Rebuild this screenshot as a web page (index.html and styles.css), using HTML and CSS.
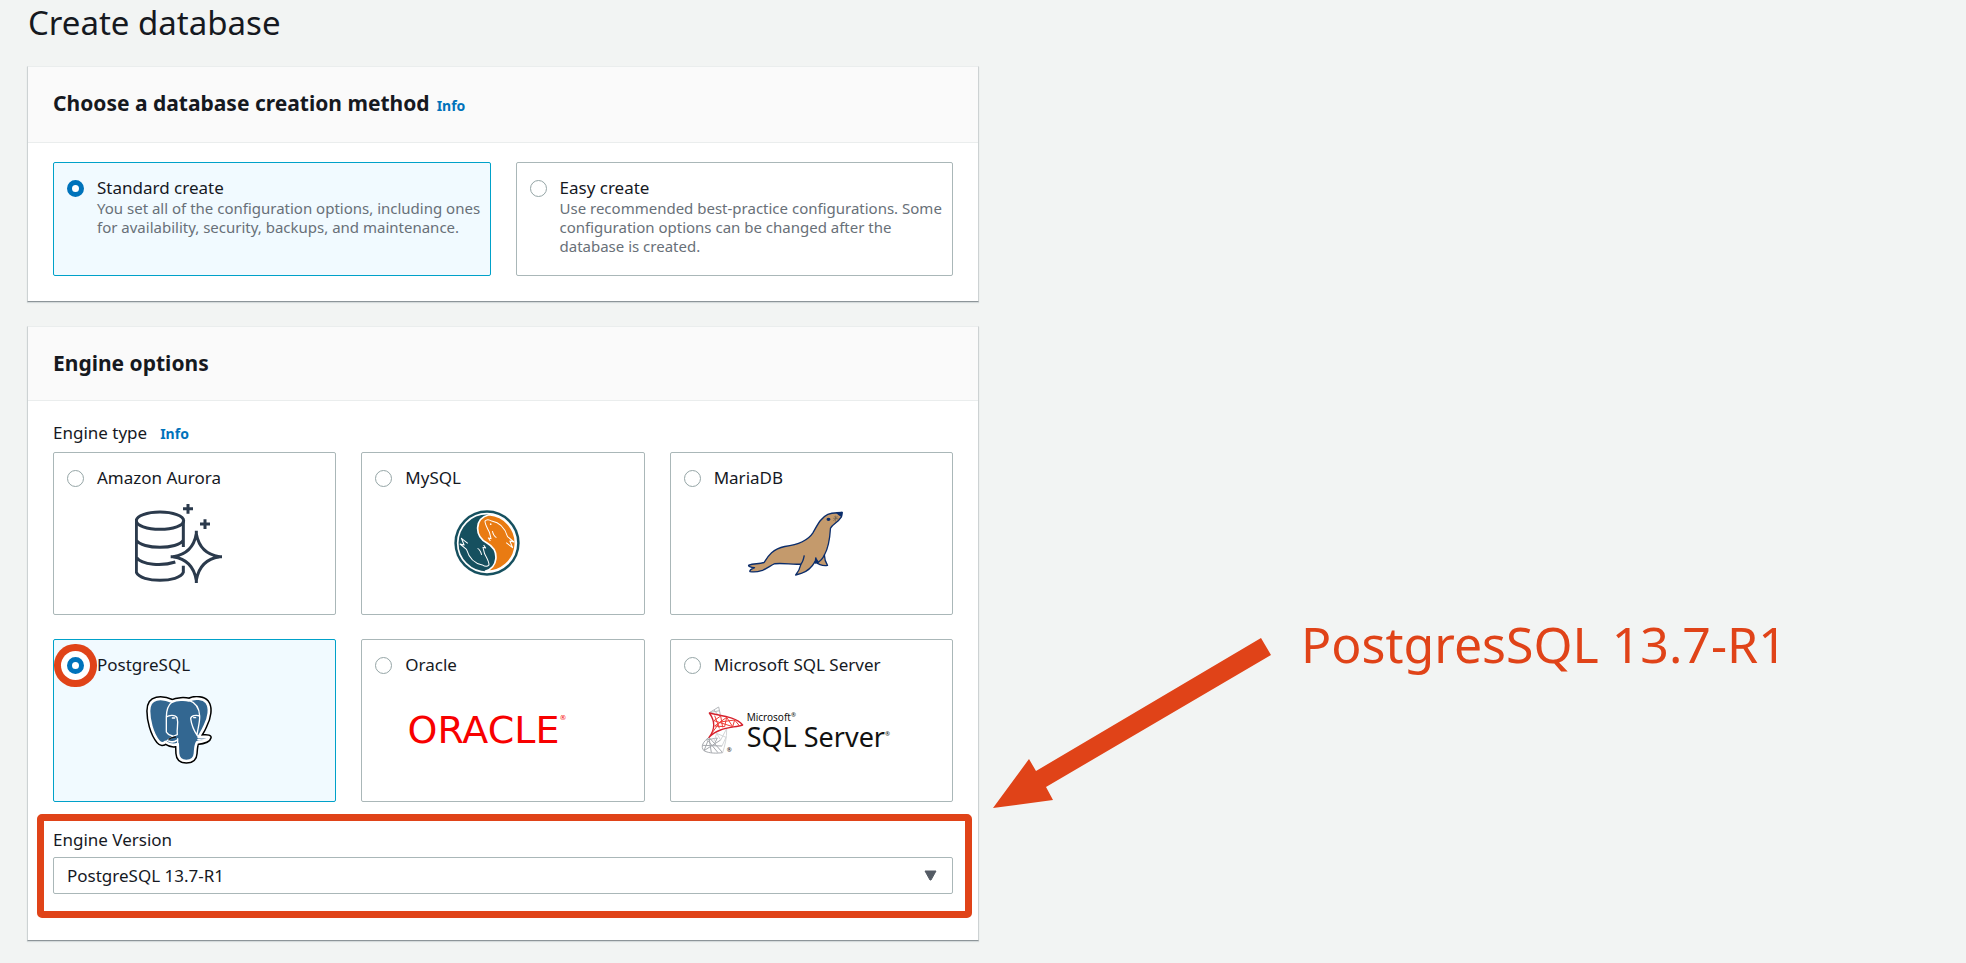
FILE: index.html
```html
<!DOCTYPE html>
<html lang="en">
<head>
<meta charset="utf-8">
<title>Create database</title>
<link rel="stylesheet" href="styles.css">
</head>
<body>
<div class="page">
  <main class="wizard">
    <h1 class="page-title">Create database</h1>

    <section class="panel">
      <header class="panel-header panel-header-info">
        <h2 class="panel-title">Choose a database creation method</h2>
        <a class="info" href="#">Info</a>
      </header>
      <div class="panel-body method-body">
        <div class="methods">
          <label class="tile method selected">
            <input class="radio" type="radio" name="method" checked>
            <span class="tile-text">
              <span class="tile-name">Standard create</span>
              <span class="tile-desc">You set all of the configuration options, including ones for availability, security, backups, and maintenance.</span>
            </span>
          </label>
          <label class="tile method">
            <input class="radio" type="radio" name="method">
            <span class="tile-text">
              <span class="tile-name">Easy create</span>
              <span class="tile-desc">Use recommended best-practice configurations. Some configuration options can be changed after the database is created.</span>
            </span>
          </label>
        </div>
      </div>
    </section>

    <section class="panel">
      <header class="panel-header">
        <h2 class="panel-title">Engine options</h2>
      </header>
      <div class="panel-body">
        <div class="field-head">
          <span id="engine-type">Engine type</span>
          <a class="info" href="#">Info</a>
        </div>
        <div class="engines" role="radiogroup" aria-labelledby="engine-type">
          <label class="tile engine">
            <span class="engine-head"><input class="radio" type="radio" name="engine"><span class="tile-name">Amazon Aurora</span></span>
            <span class="logo">
              <svg width="87" height="79" viewBox="45 38 261 237" fill="none" stroke="#2b3a4c" stroke-width="9">
                <ellipse cx="120" cy="88" rx="71" ry="26"/>
                <path d="M49 88V243C62 275 178 275 190 243V223M190 88V167M49 146C66 175 174 175 190 146M49 198C66 222 128 224 166 212"/>
                <path d="M229 128C222 165 200 190 160 196C200 202 222 228 229 266C236 228 258 202 298 196C258 190 236 165 229 128Z"/>
                <path d="M229 118V140M229 254V275M152 196H172M286 196H306"/>
                <path d="M204 38V67M189 52H219M255 84V113M240 98H270"/>
              </svg>
            </span>
          </label>
          <label class="tile engine">
            <span class="engine-head"><input class="radio" type="radio" name="engine"><span class="tile-name">MySQL</span></span>
            <span class="logo">
              <svg width="66" height="66" viewBox="42 29 196 196" fill="none">
                <circle cx="140" cy="127" r="97" fill="#16505f"/>
                <circle cx="140" cy="127" r="87" fill="#16505f" stroke="#fff" stroke-width="5"/>
                <path d="M146 43A84 84 0 0 1 134 211C172 202 180 150 140 127C102 106 102 54 146 43Z" fill="#e97b12" stroke="#fff" stroke-width="5"/>
                <g stroke="#fff" stroke-width="3" stroke-linejoin="round">
                  <path d="M156 92C158 100 162 108 168 111M150 121L144 112L152 114L147 95C142 84 134 73 134 62C139 56 148 58 154 62C178 66 193 82 201 108L220 124L208 121L216 141L197 126"/>
                  <circle cx="151" cy="71" r="1"/>
                </g>
                <g stroke="#fff" stroke-width="3" stroke-linejoin="round" transform="rotate(180 140 127)">
                  <path d="M156 92C158 100 162 108 168 111M150 121L144 112L152 114L147 95C142 84 134 73 134 62C139 56 148 58 154 62C178 66 193 82 201 108L220 124L208 121L216 141L197 126"/>
                </g>
              </svg>
            </span>
          </label>
          <label class="tile engine">
            <span class="engine-head"><input class="radio" type="radio" name="engine"><span class="tile-name">MariaDB</span></span>
            <span class="logo">
              <svg width="96" height="65" viewBox="52 46 288 196" fill="none" stroke="#0b2d6b" stroke-width="4" stroke-linejoin="round">
                <path fill="#c49a6c" d="M338 50L336 64C325 82 308 86 303 98C301 130 298 155 285 178C284 190 288 200 294 210C280 212 268 208 257 198C248 214 235 228 215 234L198 239C207 228 212 215 214 206C190 209 165 202 135 205C115 213 100 234 60 229C58 222 66 220 74 217C62 216 53 212 57 209C72 202 88 208 103 201C115 180 130 160 165 153C205 148 235 135 250 112C265 85 275 65 295 56C310 51 325 52 338 50Z"/>
                <path d="M214 206C220 200 222 190 224 180M257 200L259 186M262 203C276 196 281 187 285 178"/>
                <path fill="#0b2d6b" d="M259 190L266 200L257 203ZM322 51L338 50L336 62L330 58Z"/>
                <ellipse cx="297" cy="71" rx="4" ry="3" fill="#0b2d6b"/>
                <path stroke="#6f6256" stroke-width="2" d="M315 62L324 72M324 61L312 76M311 68H327M318 60V78"/>
              </svg>
            </span>
          </label>
          <label class="tile engine selected">
            <span class="engine-head"><input class="radio ringed" type="radio" name="engine" checked><span class="tile-name">PostgreSQL</span></span>
            <span class="logo">
              <svg width="66" height="68" viewBox="318 230 198 204" fill="none" stroke-linejoin="round" stroke-linecap="round">
                <path stroke="#000" stroke-width="17" d="M350 240C368 236 385 242 397 247C410 240 435 240 447 243C465 234 490 237 500 249C512 265 507 295 494 320C488 335 480 345 476 353C488 354 504 350 507 354C505 364 485 368 471 369C466 378 466 388 465 402C464 418 455 425 439 425C423 425 415 418 414 402L413 374C400 379 385 374 376 368C370 374 362 374 356 366C336 342 327 300 327 275C327 255 335 243 350 240Z"/>
                <path fill="#336791" stroke="#fff" stroke-width="8" d="M350 240C368 236 385 242 397 247C410 240 435 240 447 243C465 234 490 237 500 249C512 265 507 295 494 320C488 335 480 345 476 353C488 354 504 350 507 354C505 364 485 368 471 369C466 378 466 388 465 402C464 418 455 425 439 425C423 425 415 418 414 402L413 374C400 379 385 374 376 368C370 374 362 374 356 366C336 342 327 300 327 275C327 255 335 243 350 240Z"/>
                <path stroke="#fff" stroke-width="4" d="M397 247C384 257 379 272 379 293V338C384 346 390 349 398 350M447 243C468 250 478 268 479 290C480 312 472 330 471 348M379 293C388 286 406 286 411 295C417 315 409 326 412 346C394 350 388 360 376 368M479 290C468 286 453 289 452 298C455 320 463 336 472 349C478 353 490 356 500 355M413 374L413 358"/>
                <path stroke="#fff" stroke-width="4" d="M397 296H404M461 295H467"/>
                <path stroke="#111" stroke-width="4" d="M387 360C393 354 399 354 406 353"/>
                <path stroke="#fff" stroke-width="5" d="M387 366C396 369 404 368 410 363M474 361C484 363 496 361 502 357"/>
              </svg>
            </span>
          </label>
          <label class="tile engine">
            <span class="engine-head"><input class="radio" type="radio" name="engine"><span class="tile-name">Oracle</span></span>
            <span class="logo oracle">ORACLE<span class="oracle-mark">®</span></span>
          </label>
          <label class="tile engine">
            <span class="engine-head"><input class="radio" type="radio" name="engine"><span class="tile-name">Microsoft SQL Server</span></span>
            <span class="logo mssql">
              <svg width="43" height="48" viewBox="41 44 129 144" fill="none" stroke-width="3" stroke-linejoin="round">
                <path stroke="#b4b7bb" d="M66 64L94 47L99 70M66 64L97 58M80 56L90 68"/>
                <path stroke="#a6a9ae" d="M65 138C48 150 38 166 50 178C65 187 90 186 106 184M65 138L72 184M65 138L106 184M50 178L100 146M50 178L62 148L92 184M45 162L104 164M56 146L90 140L80 160"/>
                <path stroke="#d4d6d8" d="M118 112C119 140 112 165 106 184M118 112L100 146L88 126L116 138L104 164M88 126L80 150"/>
                <path stroke="#d5202c" stroke-width="4" d="M66 65C96 73 146 76 166 101C136 110 92 108 65 138C84 114 84 90 66 65Z"/>
                <path stroke="#ef3a34" d="M82 73L96 111M82 104L118 78L112 106M80 88L136 106L118 78M80 88L100 74L106 108M136 106L142 86L98 92M74 125L98 92M82 104L112 106M142 86L156 103"/>
              </svg>
              <small class="mssql-mark">®</small>
              <span class="mssql-text">
                <span class="mssql-maker">Microsoft<span class="reg">®</span></span>
                <span class="mssql-name">SQL Server<span class="reg">®</span></span>
              </span>
            </span>
          </label>
        </div>
        <div class="version">
          <label class="version-label" for="version">Engine Version</label>
          <div class="select-wrap">
            <select class="select" id="version"><option>PostgreSQL 13.7-R1</option></select>
            <svg class="caret" width="13" height="11" viewBox="0 0 13 11"><path d="M1 1H12L7 10H6Z" fill="#545b64" stroke="#545b64" stroke-linejoin="round"/></svg>
          </div>
        </div>
      </div>
    </section>
  </main>

  <aside class="callout">
    <svg class="arrow" width="278" height="170" viewBox="0 0 278 170"><path d="M268 0L278 17L53 149L60 162L0 170L36 121L43 133Z" fill="#e04318"/></svg>
    <p class="callout-text">PostgresSQL 13.7-R1</p>
  </aside>
</div>
</body>
</html>
```
FILE: styles.css
```css
* {
  box-sizing: border-box;
}

body {
  margin: 0;
  background: #f2f4f3;
  color: #16191f;
  font: 17px/24px "Noto Sans", "Open Sans", sans-serif;
}

.page {
  display: grid;
  grid-template-columns: minmax(0, 952fr) minmax(0, 987fr);
  padding-left: 27px;
}

.page-title {
  margin: 0;
  padding-left: 1px;
  height: 66px;
  font-size: 33px;
  line-height: 46px;
  font-weight: 400;
}

.panel {
  margin-bottom: 24px;
  background: #fff;
  border: 1px solid #cdd2d3;
  border-top-color: #eaeded;
  border-bottom-color: #8d9599;
  box-shadow: 0 1px 1px #d5dadb;
}

.panel-header {
  display: flex;
  align-items: baseline;
  gap: 7px;
  padding: 20px 25px;
  background: #fafafa;
  border-bottom: 1px solid #eaeded;
}

.panel-header-info {
  padding-bottom: 22px;
}

.panel-title {
  margin: 0;
  font-size: 21px;
  line-height: 33px;
  font-weight: 700;
}

.info {
  color: #0073bb;
  font-size: 14px;
  line-height: 20px;
  font-weight: 700;
  text-decoration: none;
}

.panel-body {
  padding: 20px 25px 22px;
}

.method-body {
  padding-top: 19px;
  padding-bottom: 25px;
}

.methods,
.engines {
  display: grid;
  grid-template-columns: repeat(2, minmax(0, 1fr));
  gap: 24px 25px;
}

.engines {
  grid-template-columns: repeat(3, minmax(0, 1fr));
}

.tile {
  border: 1px solid #aab7b8;
  border-radius: 2px;
  background: #fff;
  padding: 14px 8px 14px 13px;
}

.selected {
  border-color: #00a1c9;
  background: #f1faff;
}

.method {
  display: flex;
  gap: 13px;
  min-height: 114px;
}

.radio {
  appearance: none;
  flex: none;
  width: 17px;
  height: 17px;
  margin: 3px 0 0;
  border: 1px solid #95a5a6;
  border-radius: 50%;
  background: #fff;
}

.radio:checked {
  border: 5px solid #0073bb;
}

.ringed {
  box-shadow: 0 0 0 6px #fff, 0 0 0 13px #e04318;
}

.tile-text,
.tile-name,
.tile-desc {
  display: block;
}

.tile-name {
  line-height: 22px;
}

.tile-desc {
  color: #687078;
  font-size: 15px;
  line-height: 19px;
}

.field-head {
  display: flex;
  align-items: baseline;
  gap: 13px;
  margin-bottom: 7px;
}

.engine-head {
  display: flex;
  gap: 13px;
}

.logo {
  display: flex;
  align-items: center;
  justify-content: center;
  height: 104px;
  margin: 2px 0 5px;
  padding-right: 37px;
}

.oracle {
  color: #f80000;
  font: 38px/40px "DejaVu Sans", sans-serif;
}

.oracle-mark {
  align-self: flex-start;
  margin-top: 30px;
  font-size: 7px;
  line-height: 20px;
}

.mssql {
  color: #111;
  white-space: nowrap;
}

.mssql-mark {
  align-self: flex-end;
  width: 20px;
  margin: 0 0 20px -17px;
  font-size: 6px;
}

.mssql-text {
  display: grid;
}

.mssql-maker,
.mssql-name {
  display: flex;
  align-items: flex-start;
}

.mssql-maker {
  font-size: 10px;
  line-height: 12px;
}

.mssql-name {
  font-size: 27px;
  line-height: 27px;
}

.reg {
  font-size: 6px;
  line-height: 8px;
}

.mssql-name .reg {
  margin-top: 7px;
}

.version {
  margin: 12px -19px 0 -16px;
  padding: 7px 12px 17px 9px;
  border: 7px solid #e04318;
  border-radius: 5px;
}

.version-label {
  display: block;
  margin-bottom: 5px;
}

.select-wrap {
  position: relative;
}

.select {
  appearance: none;
  display: block;
  width: 100%;
  height: 37px;
  padding: 0 40px 0 13px;
  border: 1px solid #aab7b8;
  border-radius: 2px;
  background: #fff;
  color: #16191f;
  font: inherit;
}

.caret {
  position: absolute;
  right: 16px;
  top: 13px;
  pointer-events: none;
}

.callout {
  display: flex;
  align-items: flex-start;
  gap: 30px;
  padding: 638px 0 0 14px;
}

.arrow {
  flex: none;
}

.callout-text {
  margin: -28px 0 0;
  color: #e04318;
  font-size: 50px;
  line-height: 68px;
  white-space: nowrap;
}
```
